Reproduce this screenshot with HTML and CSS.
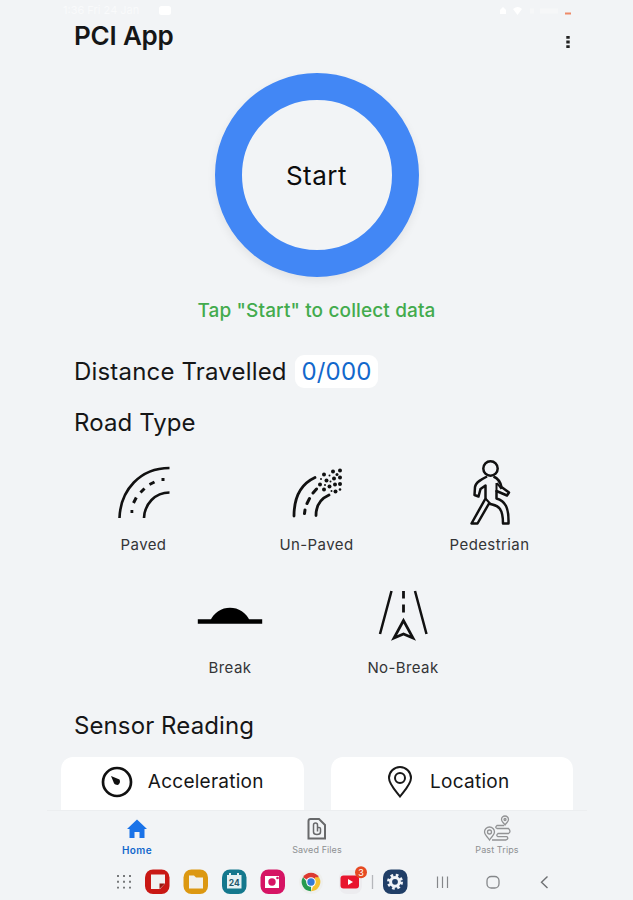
FILE: index.html
```html
<!DOCTYPE html>
<html lang="en">
<head>
    <meta charset="UTF-8">
    <meta name="viewport" content="width=device-width, initial-scale=1.0">
    <title>PCI App</title>
    <link rel="stylesheet" href="styles.css">
</head>
<body>
    <div class="status-bar">
        <span class="status-time">1:36 Fri 24 Jan</span>
        <svg class="status-video" width="12" height="9" viewBox="0 0 12 9"><rect width="12" height="9" rx="2.5" fill="#fff"/></svg>
        <svg class="status-icons" width="75" height="16" viewBox="0 0 75 16">
            <path d="M3 12V8l3-3 3 3v4z" fill="#fff"/>
            <path d="M16 7q5-4 9 0l-4.500 6z" fill="#fff"/>
            <path d="M33 9h4M43 9h18" stroke="#f6f7f8" stroke-width="5"/>
            <path d="M68 11.500h6" stroke="#ee8a68" stroke-width="2"/>
        </svg>
    </div>

    <header class="header">
        <h1>PCI App</h1>
        <svg class="menu" width="6" height="14" viewBox="0 0 6 14"><path d="M1.300 1h3.400v2.800H1.300zM1.300 5.600h3.400v2.800H1.300zM1.300 10.200h3.400V13H1.300z" fill="#222"/></svg>
    </header>

    <button class="start-button">Start</button>
    <p class="hint">Tap "Start" to collect data</p>

    <div class="distance">
        <h2 class="distance-title">Distance Travelled</h2>
        <span class="distance-value">0/000</span>
    </div>

    <h2 class="road-title">Road Type</h2>
    <div class="road-row">
        <div class="road-item">
            <svg width="66" height="66" viewBox="0 0 66 66" fill="none" stroke="#111" stroke-width="2.600">
                <path d="M8.500 58C9.500 30 29 8 58.500 8M33 58C33.500 44 44 32.500 58.500 32.500"/>
                <path d="M22.500 43l2.800-5.500M29.500 32.500l4-4M38.500 24.500l5-2.500" stroke-width="3"/>
                <path d="M19.500 51.500h2.800M50.500 19.500h3" stroke-width="2.800"/>
            </svg>
            <span class="paved">Paved</span>
        </div>
        <div class="road-item">
            <svg width="66" height="66" viewBox="0 0 66 66" fill="none" stroke="#111" stroke-width="2.800" stroke-linecap="round">
                <path d="M10 56C10 38 17 24 31 17.500M32 55.500C32 46 36 39 45 35"/>
                <path d="M20.500 53.500l.5-3.500M23 43.500l2.500-5M29 33l3.500-4" stroke-width="3"/>
                <g fill="#111" stroke="none">
                    <circle cx="40" cy="14.500" r="2"/><circle cx="49" cy="11.500" r="2"/><circle cx="56" cy="10.500" r="2"/>
                    <circle cx="45.500" cy="15.500" r="1"/><circle cx="53" cy="14.500" r="1.500"/><circle cx="50" cy="18.500" r="2"/>
                    <circle cx="56" cy="17.500" r="2"/><circle cx="42.500" cy="20.500" r="2"/><circle cx="36" cy="24.500" r="2"/>
                    <circle cx="37" cy="19" r="1"/><circle cx="46.500" cy="21.500" r="1"/><circle cx="45.500" cy="26.500" r="2"/>
                    <circle cx="51" cy="24.500" r="2"/><circle cx="56" cy="24" r="2"/><circle cx="40" cy="29.500" r="2"/>
                    <circle cx="47.500" cy="31" r="1"/><circle cx="51.500" cy="31.500" r="2"/><circle cx="56" cy="29.500" r="1.300"/>
                    <circle cx="41" cy="25" r="1"/>
                </g>
            </svg>
            <span class="unpaved">Un-Paved</span>
        </div>
        <div class="road-item">
            <svg width="66" height="66" viewBox="0 0 66 66" fill="none" stroke="#111" stroke-width="2.500" stroke-linejoin="round">
                <circle cx="33.500" cy="8.500" r="7.200"/>
                <path d="M30 16.500C25 19 19 22 18 27L17.500 35l4 1.500L23.500 29l5-3.500V38.500L14.500 63.500h6L32 43.500C38 46 46 44 46 63.500h5.500C52 47 48 41 39.500 38.500V31L50 35.500l2-3L44.500 27C43 20 40 18 36.500 16.500"/>
                <path d="M28.500 38.500l4.500 5M39.500 23v9M40 23l4.500 6" stroke-width="2"/>
            </svg>
            <span class="pedestrian">Pedestrian</span>
        </div>
    </div>
    <div class="road-row road-row-second">
        <div class="road-item">
            <svg width="66" height="66" viewBox="0 0 66 66">
                <path d="M3 38.500h60" stroke="#000" stroke-width="4.400" stroke-linecap="square"/>
                <path d="M13 38.500C20 20 46 20 53 38.500z" fill="#000"/>
            </svg>
            <span class="break">Break</span>
        </div>
        <div class="road-item">
            <svg width="66" height="66" viewBox="0 0 66 66" fill="none" stroke="#111" stroke-width="2.500">
                <path d="M21.500 8L10 51M45 8l11.500 43"/>
                <path d="M33.500 8v7.500M33.500 21.500v8" stroke-width="2.800"/>
                <path d="M33.500 37.500L24 55l9.500-4 9.500 4z" stroke-width="2.700"/>
            </svg>
            <span class="nobreak">No-Break</span>
        </div>
    </div>

    <h2 class="sensor-title">Sensor Reading</h2>
    <div class="sensor-cards">
        <div class="sensor-card">
            <svg width="32" height="32" viewBox="0 0 32 32"><circle cx="16" cy="16" r="14" fill="none" stroke="#111" stroke-width="2.700"/><path d="M10 10l8.500 3.500q1.500 3-1.500 5.500-4 0-4.500-3z" fill="#111"/></svg>
            <span class="acceleration">Acceleration</span>
        </div>
        <div class="sensor-card sensor-card-location">
            <svg width="32" height="32" viewBox="0 0 32 32" fill="none" stroke="#181818" stroke-width="2"><path d="M16 30.500C11 24 5 18 5 12a11 11 0 0 1 22 0c0 6-6 12-11 18.500z"/><circle cx="16" cy="12" r="5"/></svg>
            <span class="location">Location</span>
        </div>
    </div>

    <nav class="tab-bar">
        <div class="tab tab-active">
            <svg width="28" height="28" viewBox="0 0 28 28"><path d="M14 4.500L24 14h-2.500v9h-5v-6h-5v6h-5v-9H4z" fill="#1a73e8"/></svg>
            <span>Home</span>
        </div>
        <div class="tab">
            <svg width="28" height="28" viewBox="0 0 28 28" fill="none" stroke="#68696b" stroke-width="2"><path d="M7.500 4h8.500l6 6v13.500H5.500V6q0-2 2-2z"/><path d="M10.500 10v7q0 2.500 3.500 2.500t3.500-2.500v-3q0-2-3-1.500v4M10.500 10q0-2 2-2t2 2v3" stroke-width="1.500"/></svg>
            <span>Saved Files</span>
        </div>
        <div class="tab">
            <svg width="28" height="28" viewBox="0 0 28 28" fill="none" stroke="#929395" stroke-width="1.300">
                <path d="M6.500 25C4 21 1.500 20 1.500 17a5 5 0 0 1 10 0c0 3-2.500 4-5 8z"/><circle cx="6.500" cy="17" r="2"/>
                <path d="M22 10c-2-3-3.500-3.500-3.500-5.500a3.500 3.500 0 0 1 7 0c0 2-1.500 2.500-3.500 5.500z"/><circle cx="22" cy="4.500" r="1"/>
                <path d="M21 10.500h-7q-2.500 2 0 3h11.500q3 3 0 5H15q-2.500 2 0 3.200h9q2 2-1 3.300H9"/>
            </svg>
            <span>Past Trips</span>
        </div>
    </nav>

    <div class="taskbar">
        <svg width="520" height="36" viewBox="0 0 520 36">
            <path d="M61 12h15M61 17.800h15M61 23.600h15" stroke="#77797b" stroke-width="1.900" stroke-dasharray="2 4"/>
            <rect x="89" y="5.500" width="24.500" height="24.500" rx="8" fill="#c91814"/>
            <path d="M95 10.500h14v9l-5 5.500h-9z" fill="#f1f1f1"/><path d="M103.500 25v-5.500h5.500z" fill="#971811"/>
            <rect x="127.500" y="5.500" width="24.500" height="24.500" rx="8" fill="#dc9811"/>
            <path d="M133 11.500h5l2 2h7v11h-14z" fill="#f2f1eb"/>
            <rect x="166" y="5.500" width="24.500" height="24.500" rx="8" fill="#14788d"/>
            <path d="M171 11h2v-2h2v2h6v-2h2v2h2.500v13.500H171z" fill="#e6f1f3"/>
            <text class="calendar-day" x="178.300" y="21.500" text-anchor="middle">24</text>
            <rect x="204.500" y="5.500" width="24.500" height="24.500" rx="8" fill="#d61464"/>
            <path d="M210 12h13v12h-14V12z" fill="#fff"/><circle cx="216" cy="18" r="3.700" fill="#d61464"/><circle cx="221.500" cy="14" r="1.300" fill="#d61464"/>
            <circle cx="255" cy="18" r="12" fill="#eeefee"/>
            <path d="M255 18L247 13.300A9.200 9.200 0 0 1 263 13.300z" fill="#dc3930"/>
            <path d="M255 18h-4L247 13.300A9.200 9.200 0 0 0 255 27.200z" fill="#279b4e"/>
            <path d="M255 27.200l4-9.200v-4.700h4A9.200 9.200 0 0 1 255 27.200z" fill="#f3c231"/>
            <circle cx="255" cy="18" r="4.800" fill="#fff"/><circle cx="255" cy="18" r="3.700" fill="#347bd6"/>
            <rect x="283" y="6" width="23" height="24" rx="8" fill="#ececef"/>
            <rect x="284.500" y="11.500" width="18.500" height="13" rx="3" fill="#e8142d"/><path d="M292 15l5 3-5 3z" fill="#fff"/>
            <circle cx="305" cy="8.300" r="6" fill="#e64a22"/><text class="badge-count" x="305" y="11.500" text-anchor="middle">3</text>
            <path d="M316.500 11v14" stroke="#b5b7bb" stroke-width="1.300"/>
            <rect x="327" y="5.500" width="24.500" height="24.500" rx="8" fill="#203e67"/>
            <circle cx="339" cy="17.800" r="6.500" fill="none" stroke="#f0f3f8" stroke-width="3" stroke-dasharray="2.600 2.500"/>
            <circle cx="339" cy="17.800" r="4.400" fill="none" stroke="#f0f3f8" stroke-width="3"/>
            <path d="M381.500 12.500v11.500M386.500 12.500v11.500M391.500 12.500v11.500" stroke="#85878a" stroke-width="1.200"/>
            <rect x="431" y="12.500" width="12" height="11.500" rx="4.300" fill="none" stroke="#85878a" stroke-width="1.300"/>
            <path d="M491.500 12.500l-6 5.800 6 5.800" fill="none" stroke="#6e7073" stroke-width="1.400"/>
        </svg>
    </div>
</body>
</html>
```

FILE: styles.css
```css
* {
    box-sizing: border-box;
}

body {
    margin: 0;
    width: 633px;
    height: 900px;
    overflow: hidden;
    display: flex;
    flex-direction: column;
    background-color: #f2f4f6;
    color: #151617;
    font-family: Inter, "Liberation Sans", sans-serif;
}

h1, h2, p {
    margin: 0;
    font-weight: 400;
    white-space: nowrap;
}

svg {
    display: block;
    flex-shrink: 0;
}

.status-bar {
    display: flex;
    align-items: center;
    height: 20px;
    padding: 0 61px 0 63px;
    color: #f9fafb;
    font-size: 11px;
}

.status-time {
    width: 96px;
}

.status-icons {
    margin-left: auto;
}

.header {
    display: flex;
    justify-content: space-between;
    height: 53px;
    padding: 0 62px 0 74px;
}

.header h1 {
    font-size: 26px;
    font-weight: 600;
    line-height: 32px;
    letter-spacing: -0.2px;
}

.menu {
    margin-top: 15px;
}

.start-button {
    flex-shrink: 0;
    align-self: center;
    width: 204px;
    height: 204px;
    border: 27px solid #4287f5;
    border-radius: 50%;
    padding: 2px 0 0;
    background: #f2f4f6;
    box-shadow: 0 4px 10px rgba(0, 0, 0, 0.07);
    color: #0c0c0d;
    font: 400 26px/30px Inter, sans-serif;
    letter-spacing: 0.5px;
}

.hint {
    margin-top: 22px;
    line-height: 24px;
    text-align: center;
    color: #43ab4d;
    font-size: 19px;
    font-weight: 500;
    letter-spacing: 0.13px;
}

.distance {
    display: flex;
    align-items: center;
    height: 33px;
    margin-top: 32px;
    padding-left: 74px;
    font-size: 24px;
}

.distance-title {
    width: 221px;
    font-size: 24px;
    letter-spacing: 0.18px;
}

.distance-value {
    width: 83px;
    height: 33px;
    border-radius: 9px;
    background: #fff;
    color: #1268cc;
    line-height: 34px;
    text-align: center;
    letter-spacing: 0.2px;
}

.road-title {
    height: 30px;
    margin: 20px 0 0 74px;
    line-height: 30px;
    font-size: 24px;
    letter-spacing: 0.1px;
}

.road-row {
    display: flex;
    justify-content: center;
    height: 101px;
    margin-top: 22px;
}

.road-item {
    display: flex;
    flex-direction: column;
    align-items: center;
    width: 173px;
    color: #343536;
    font-size: 15px;
    line-height: 20px;
    letter-spacing: 0.4px;
}

.road-item span {
    margin-top: 9px;
}

.road-row-second {
    margin-top: 22px;
}

.sensor-title {
    height: 30px;
    margin: 27px 0 0 74px;
    line-height: 30px;
    font-size: 24px;
    letter-spacing: 0.1px;
}

.sensor-cards {
    display: grid;
    grid-template-columns: 1fr 1fr;
    gap: 27px;
    height: 53px;
    margin-top: 16px;
    padding: 0 60px 0 61px;
}

.sensor-card {
    display: flex;
    justify-content: center;
    gap: 15px;
    padding-top: 9px;
    border-radius: 12px 12px 0 0;
    background: #fff;
    font-size: 19px;
    line-height: 32px;
    letter-spacing: 0.25px;
}

.sensor-card-location {
    gap: 14px;
    padding-right: 10px;
}

.tab-bar {
    display: flex;
    height: 54px;
    margin: 0 46px 0 47px;
    border-top: 1px solid #eceef0;
    padding-top: 4px;
}

.tab {
    display: flex;
    flex: 1;
    flex-direction: column;
    align-items: center;
    color: #8e9092;
    font-size: 9px;
    line-height: 14px;
    letter-spacing: 0.1px;
}

.tab-active {
    color: #1268cc;
    font-size: 10px;
    font-weight: 600;
    letter-spacing: 0.4px;
}

.taskbar {
    height: 36px;
    margin-left: 56px;
}

.calendar-day {
    fill: #24586c;
    font-size: 8.5px;
    font-weight: 700;
}

.badge-count {
    fill: #fff;
    font-size: 9px;
}
```
